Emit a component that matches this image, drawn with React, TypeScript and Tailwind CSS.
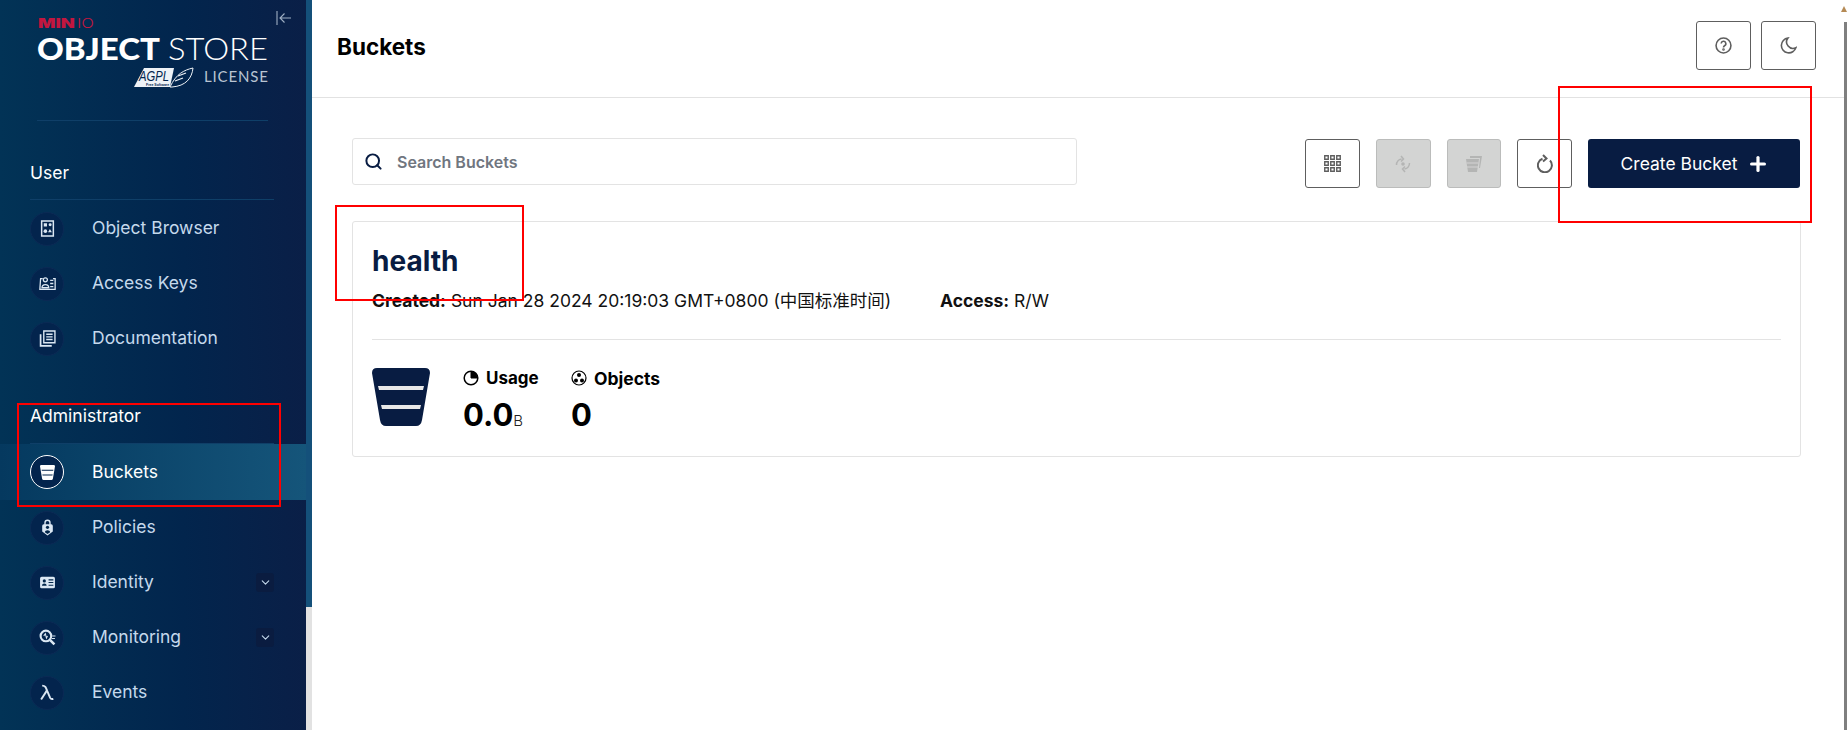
import { ChevronDown, Plus, Search } from "lucide-react";
import type { ReactNode } from "react";

const IconObjects = () => (
  <svg viewBox="0 0 16 16" className="h-[17px] w-[17px]" fill="#dbe7f3">
    <path d="M2.500 1h11v14h-11z" fill="none" stroke="#dbe7f3" strokeWidth="1.400" />
    <path d="M4.500 3h3v3h-3zM8.500 11.500l1.800-3 1.800 3z" />
    <circle cx="10.500" cy="4.500" r="1.400" />
    <circle cx="6" cy="10.500" r="1.700" />
  </svg>
);

const IconKeys = () => (
  <svg viewBox="0 0 16 16" className="h-[17px] w-[17px]" fill="none" stroke="#dbe7f3" strokeWidth="1.200">
    <path d="M3.500 3.500H1.500L.8 13.500h14.400V3.500h-2" />
    <circle cx="6" cy="4.500" r="1.900" />
    <path d="M2.800 12c0-4 6.400-4 6.400 0z" />
    <path d="M10.500 5h3M10.500 8h3M10.500 11h3" />
  </svg>
);

const IconDocs = () => (
  <svg viewBox="0 0 16 16" className="h-[17px] w-[17px]" fill="none" stroke="#dbe7f3" strokeWidth="1.300">
    <path d="M4.500 1h10.500v11H4.500z" />
    <path d="M6.800 4h6M6.800 6.500h6M6.800 9h6" />
    <path d="M1.500 4v11h10.500" strokeWidth="1.600" />
  </svg>
);

const IconPolicies = () => (
  <svg viewBox="0 0 16 16" className="h-[17px] w-[17px]" fill="#dbe7f3">
    <path d="M5 5V3.500a3 3 0 0 1 6 0V5h.5A1.500 1.500 0 0 1 13 6.500v5.200L8 15.500l-5-3.800V6.500A1.500 1.500 0 0 1 4.500 5zm1.300 0h3.400V3.500a1.700 1.700 0 0 0-3.400 0z" />
    <circle cx="8" cy="7.800" r="1.500" fill="#02264a" />
    <path d="M5.500 12.500c0-2.600 5-2.600 5 0L8 14.200z" fill="#02264a" />
  </svg>
);

const IconIdentity = () => (
  <svg viewBox="0 0 16 16" className="h-[17px] w-[17px]">
    <rect x="1" y="2.500" width="14" height="11" rx="1.500" fill="#dbe7f3" />
    <circle cx="5" cy="6.500" r="1.500" fill="#02264a" />
    <path d="M2.800 11c0-2.600 4.400-2.600 4.400 0z" fill="#02264a" />
    <path d="M9 5.500h4.500M9 8h4.500M9 10.500h4.500" stroke="#02264a" strokeWidth="1" />
  </svg>
);

const IconMonitoring = () => (
  <svg viewBox="0 0 16 16" className="h-[17px] w-[17px]" fill="none" stroke="#dbe7f3">
    <circle cx="6.500" cy="6.500" r="5" strokeWidth="2" />
    <path d="M10.500 10.500l4 4" strokeWidth="2.400" />
    <path d="M4.500 6.500l1.500-2 1 4 1-2" strokeWidth="1" />
    <path d="M12.500 6.500h3M12 9h3" strokeWidth="1" />
  </svg>
);

const IconLambda = () => (
  <svg viewBox="0 0 16 16" className="h-[17px] w-[17px]" fill="none" stroke="#dbe7f3" strokeWidth="1.800">
    <path d="M3 1.500c3 0 3.500 1.500 4.500 4.500l3 7c.5 1 1.500 1.500 3 1" />
    <path d="M7.500 6L2 14.500" />
  </svg>
);

const BucketSolid = ({ size, fill, bars }: { size: string; fill: string; bars: string }) => (
  <svg viewBox="0 0 58 58" className={size}>
    <path d="M5 0h48q5 0 5 5l-8 47q-1 6-6 6H14q-5 0-6-6L0 5q0-5 5-5z" fill={fill} />
    <path d="M6 18h46l-1 4H7zM9 37h40l-1 4H10z" fill={bars} />
  </svg>
);

// viewBox keeps the page's own coordinates, so the numbers read off the screenshot directly
const Logo = () => (
  <svg viewBox="37 15 231 75" className="h-[75px] w-[231px]">
    <text x="38" y="28" fontSize="12.500" fontWeight="900" fill="#c3163f" fontFamily="Inter, sans-serif" textLength="37" lengthAdjust="spacingAndGlyphs">MIN</text>
    <text x="77" y="28" fontSize="12.500" fontWeight="300" fill="#c3163f" fontFamily="Inter, sans-serif" textLength="17" lengthAdjust="spacingAndGlyphs">IO</text>
    <text x="37" y="59.500" fontSize="30.500" fontWeight="900" fill="#ffffff" fontFamily="Lato, sans-serif" textLength="123" lengthAdjust="spacingAndGlyphs">OBJECT</text>
    <text x="168" y="59.500" fontSize="30.500" fontWeight="300" fill="#ffffff" fontFamily="Lato, sans-serif" textLength="100" lengthAdjust="spacingAndGlyphs">STORE</text>
    <path d="M144 68h30l-4 19h-36z" fill="#eef2f6" />
    <path d="M170 87C176 74 184 70 193 68c-1 10-7 18-21 19z" fill="#02254d" stroke="#eef2f6" strokeWidth="1" />
    <path d="M178 76l8-3M175 81l8-3" stroke="#eef2f6" strokeWidth="1.200" />
    <text x="139" y="81" fontSize="14" fontStyle="italic" fill="#02254d" fontFamily="Liberation Sans, sans-serif" textLength="30" lengthAdjust="spacingAndGlyphs">AGPL</text>
    <text x="146" y="85.600" fontSize="3.500" fontWeight="700" fill="#02254d" fontFamily="Liberation Sans, sans-serif">Free Software</text>
    <text x="204" y="81.700" fontSize="15" fill="#b9c4d2" fontFamily="Lato, sans-serif" textLength="64">LICENSE</text>
  </svg>
);

const userItems = [
  { label: "Object Browser", icon: <IconObjects /> },
  { label: "Access Keys", icon: <IconKeys /> },
  { label: "Documentation", icon: <IconDocs /> },
];

const adminItems = [
  { label: "Policies", icon: <IconPolicies /> },
  { label: "Identity", icon: <IconIdentity />, more: true },
  { label: "Monitoring", icon: <IconMonitoring />, more: true },
  { label: "Events", icon: <IconLambda /> },
];

const NavItem = ({ label, icon, more }: { label: string; icon: ReactNode; more?: boolean }) => (
  <div className="flex h-[55px] shrink-0 items-center pl-[30px] pr-[32px]">
    <div className="flex h-[34px] w-[34px] items-center justify-center rounded-full border border-[#0b2a55] bg-[#03244d]">
      {icon}
    </div>
    <span className="ml-[28px] flex-1 text-[17.5px] text-[#c5d9ec]">{label}</span>
    {more && (
      <div className="flex h-[19px] w-[18px] items-center justify-center rounded-[3px] bg-[#0a1c40]">
        <ChevronDown className="h-[13px] w-[13px] text-[#c5d9ec]" />
      </div>
    )}
  </div>
);

const SquareButton = ({ children, disabled }: { children: ReactNode; disabled?: boolean }) => (
  <div
    className={
      disabled
        ? "flex h-[49px] w-[54.5px] items-center justify-center rounded-[3px] border border-[#bbbcbb] bg-[#d3d4d3]"
        : "flex h-[49px] w-[55px] items-center justify-center rounded-[3px] border border-[#5e5e5e] bg-white"
    }
  >
    {children}
  </div>
);

const Sidebar = () => (
  <aside className="flex h-full w-[306px] shrink-0 flex-col overflow-hidden bg-gradient-to-r from-[#023356] via-[#02254d] via-60% to-[#0a1f47]">
    <div className="relative h-[120px] shrink-0 pl-[37px] pt-[15px]">
      <Logo />
      <svg viewBox="0 0 16 16" className="absolute left-[276px] top-[10px] h-[16px] w-[16px]" fill="none" stroke="#9fb0c4" strokeWidth="1.100">
        <path d="M1 1v14M15 8H4M8.500 3.500L4 8l4.500 4.500" />
      </svg>
    </div>
    <div className="ml-[37px] h-px w-[231px] shrink-0 bg-[#0f3f68]" />
    <div className="h-[40px] shrink-0" />
    <div className="ml-[30px] h-[39px] w-[244px] shrink-0 border-b border-[#0f3f68] text-[17.5px] leading-[24px] text-white">User</div>
    <div className="flex flex-col pt-[1px]">
      {userItems.map((item) => (
        <NavItem key={item.label} label={item.label} icon={item.icon} />
      ))}
    </div>
    <div className="h-[38px] shrink-0" />
    <div className="ml-[30px] h-[40px] w-[244px] shrink-0 border-b border-[#0f3f68] text-[17.5px] leading-[24px] text-white">Administrator</div>
    <div className="flex h-[56px] shrink-0 items-center bg-gradient-to-r from-[#05395f] to-[#15557a] pl-[30px]">
      <div className="flex h-[34px] w-[34px] items-center justify-center rounded-full border border-white bg-[#03244d]">
        <BucketSolid size="h-[15px] w-[15px]" fill="#ffffff" bars="#03244d" />
      </div>
      <span className="ml-[28px] text-[17.5px] text-white">Buckets</span>
    </div>
    <div className="flex flex-col">
      {adminItems.map((item) => (
        <NavItem key={item.label} label={item.label} icon={item.icon} more={item.more} />
      ))}
    </div>
  </aside>
);

const BucketCard = () => (
  <div className="mt-[33px] w-[1449px] rounded-[3px] border border-[#e3e3e3] pl-[19px] pr-[19px] pt-[19px]">
    <div className="h-[40px] text-[28px] font-bold leading-[40px] text-[#081c42]">health</div>
    <div className="mt-[8px] flex h-[24px] items-center text-[17.5px] leading-[24px] text-[#111]">
      <span className="w-[568px] whitespace-nowrap">
        <b className="font-bold">Created:</b> Sun Jan 28 2024 20:19:03 GMT+0800 (中国标准时间)
      </span>
      <span>
        <b className="font-bold">Access:</b> R/W
      </span>
    </div>
    <div className="mt-[26px] h-px bg-[#e3e3e3]" />
    <div className="flex pb-[16px] pt-[28px]">
      <BucketSolid size="h-[58px] w-[58px]" fill="#081c42" bars="#e8e8e8" />
      <div className="ml-[33px] mt-[-1px] w-[108px]">
        <div className="flex h-[24px] items-center gap-[7px] text-[17px] font-bold text-black">
          <svg viewBox="0 0 16 16" className="mt-[-2px] h-[16px] w-[16px]" fill="none" stroke="#000">
            <circle cx="8" cy="8" r="6.800" strokeWidth="1.500" />
            <path d="M8 8V1.500A6.500 6.500 0 0 1 14.500 8z" fill="#000" />
          </svg>
          Usage
        </div>
        <div className="mt-[5px] text-[31px] font-bold leading-[38px] text-black">
          0.0<span className="text-[15px] font-light text-[#222]">B</span>
        </div>
      </div>
      <div className="mt-[-1px]">
        <div className="flex h-[24px] items-center gap-[7px] text-[17.5px] font-bold text-black">
          <svg viewBox="0 0 16 16" className="mt-[-2px] h-[16px] w-[16px]" fill="#000">
            <circle cx="8" cy="8" r="7" fill="none" stroke="#000" strokeWidth="1.200" />
            <circle cx="8" cy="5" r="2" />
            <circle cx="5" cy="10.500" r="2" />
            <circle cx="11" cy="10.500" r="2" />
          </svg>
          Objects
        </div>
        <div className="mt-[5px] text-[31px] font-bold leading-[38px] text-black">0</div>
      </div>
    </div>
  </div>
);

export default function App() {
  return (
    <div className="relative flex h-[730px] w-[1847px] overflow-hidden bg-white" style={{ fontFamily: "Inter, 'Noto Sans CJK SC', sans-serif" }}>
      <Sidebar />
      {/* sidebar scrollbar */}
      <div className="flex w-[6px] shrink-0 flex-col bg-[#e2e2e2]">
        <div className="h-[607px] bg-[#14507a]" />
      </div>
      <main className="min-w-0 flex-1">
        <header className="flex h-[98px] items-center justify-between border-b border-[#e2e2e2] pb-[6px] pl-[25px] pr-[28px]">
          <h1 className="mt-[2px] text-[22.5px] font-bold text-black">Buckets</h1>
          <div className="flex gap-[10px]">
            <SquareButton>
              <svg viewBox="0 0 16 16" className="h-[17px] w-[17px]" fill="none" stroke="#5e5e5e" strokeWidth="1.500">
                <circle cx="8" cy="8" r="7" />
                <path d="M5.800 6.200a2.200 2.200 0 1 1 3.200 2c-.7.400-1 .800-1 1.600" />
                <circle cx="8" cy="11.800" r=".5" />
              </svg>
            </SquareButton>
            <SquareButton>
              <svg viewBox="0 0 16 16" className="h-[17px] w-[17px]" fill="none" stroke="#5e5e5e" strokeWidth="1.500">
                <path d="M7.500 1a7 7 0 1 0 7.500 9 6 6 0 0 1-7.500-9z" />
              </svg>
            </SquareButton>
          </div>
        </header>
        <div className="pl-[40px] pr-[39px] pt-[40px]">
          <div className="flex items-start">
            <div className="flex h-[47px] w-[725px] items-center rounded-[3px] border border-[#e3e3e3] pl-[11px]">
              <Search className="h-[19px] w-[19px] text-[#081c42]" strokeWidth={2.500} />
              <span className="ml-[14px] text-[16px] font-semibold text-[#70767f]">Search Buckets</span>
            </div>
            <div className="ml-[228px] mt-[1px] flex gap-[16px]">
              <SquareButton>
                <svg viewBox="0 0 16 16" className="h-[17px] w-[17px]" fill="none" stroke="#5e5e5e" strokeWidth="1.300">
                  <path d="M.7.700h3.300v3.300H.7zM6.350.700h3.300v3.300h-3.300zM12 .700h3.300v3.300H12zM.7 6.350h3.300v3.300H.7zM6.350 6.350h3.300v3.300h-3.300zM12 6.350h3.300v3.300H12zM.7 12h3.300v3.300H.7zM6.350 12h3.300v3.300h-3.300zM12 12h3.300v3.300H12z" />
                </svg>
              </SquareButton>
              <SquareButton disabled>
                <svg viewBox="0 0 16 18" className="h-[18px] w-[16px]" fill="none" stroke="#b4b5b4" strokeWidth="1.500">
                  <path d="M1.500 10a6 6 0 0 1 5-6M6 1l2.500 3L6 6.500M14.500 8a6 6 0 0 1-5 6M10 17l-2.500-3L10 11.500" />
                  <circle cx="8" cy="9" r="1.800" fill="#b4b5b4" stroke="none" />
                </svg>
              </SquareButton>
              <SquareButton disabled>
                <svg viewBox="0 0 18 18" className="h-[18px] w-[18px]">
                  <path d="M5 1h12l-2 12h-1l1-10H5z" fill="#b4b5b4" />
                  <path d="M1 4h13l-2 13H3z" fill="#b4b5b4" />
                  <path d="M1.500 8h12M2 12h11" stroke="#d3d4d3" strokeWidth="1.200" />
                </svg>
              </SquareButton>
              <SquareButton>
                <svg viewBox="0 0 16 19" className="h-[19px] w-[16px]" fill="none" stroke="#5e5e5e" strokeWidth="2">
                  <path d="M5.500 4.700A7 7 0 1 0 13 6.500" />
                  <path d="M6 1l3.500 3.500L6 7.500" />
                </svg>
              </SquareButton>
              <div className="flex h-[49px] w-[212px] items-center justify-center gap-[10px] rounded-[3px] bg-[#081c42] pl-[2px] pt-[1px] text-[17.5px] text-white">
                Create Bucket
                <Plus className="h-[22px] w-[22px]" strokeWidth={3.500} />
              </div>
            </div>
          </div>
          <BucketCard />
        </div>
      </main>
      {/* page scrollbar */}
      <div className="relative w-[3px] shrink-0 bg-white">
        <div className="mt-[22px] h-[708px] bg-[#7f7f7f]" />
        <svg viewBox="0 0 6 6" className="absolute right-0 top-[6px] h-[6px] w-[6px]">
          <path d="M3 0l3 6H0z" fill="#b58a55" />
        </svg>
      </div>
      {/* red annotation boxes */}
      <div className="absolute left-[17px] top-[403px] h-[104px] w-[264px] border-2 border-[#ff0000]" />
      <div className="absolute left-[335px] top-[205px] h-[96px] w-[189px] border-2 border-[#ff0000]" />
      <div className="absolute left-[1558px] top-[86px] h-[137px] w-[254px] border-2 border-[#ff0000]" />
    </div>
  );
}
